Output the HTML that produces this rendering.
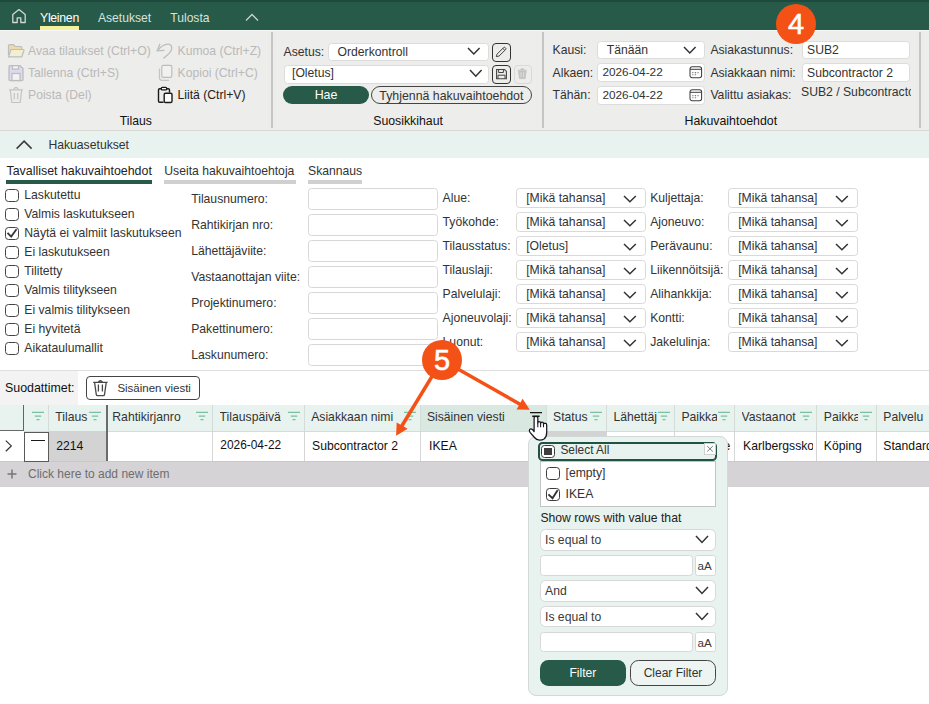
<!DOCTYPE html>
<html><head><meta charset="utf-8"><title>UI</title>
<style>
html,body{margin:0;padding:0;}
body{width:929px;height:704px;overflow:hidden;position:relative;background:#ffffff;font-family:"Liberation Sans",sans-serif;}
.r{position:absolute;}
.t{position:absolute;white-space:nowrap;line-height:1;font-family:"Liberation Sans",sans-serif;}
svg.r{overflow:visible;}
</style></head><body>
<div class="r" style="left:0px;top:0px;width:929px;height:30px;background:#275a48"></div>
<div class="r" style="left:0px;top:0px;width:929px;height:2px;background:#1f4a3b"></div>
<svg class="r" style="left:10px;top:7px;" width="18" height="18" viewBox="0 0 18 18"><path d="M2.8 15.5 V7.6 L9 2.6 L15.2 7.6 V15.5 H10.8 V10.8 H7.2 V15.5 Z" fill="none" stroke="#d2d8d5" stroke-width="1.3" stroke-linejoin="round"/></svg>
<div class="t" style="left:40px;top:12.0px;font-size:12.3px;color:#ffffff;letter-spacing:-0.3px">Yleinen</div>
<div class="r" style="left:40px;top:26px;width:39px;height:4px;background:#f3f19b"></div>
<div class="t" style="left:98px;top:12px;font-size:12.1px;color:#d9e2dd;">Asetukset</div>
<div class="t" style="left:170.3px;top:12px;font-size:12.1px;color:#d9e2dd;">Tulosta</div>
<svg class="r" style="left:245px;top:13px;" width="14" height="9" viewBox="0 0 14 9"><path d="M1 7.5 L7 1.5 L13 7.5" fill="none" stroke="#c9d2ce" stroke-width="1.3"/></svg>
<div class="r" style="left:0px;top:30px;width:929px;height:100px;background:#ededeb"></div>
<div class="r" style="left:0px;top:30px;width:929px;height:1px;background:#f6f6f4"></div>
<div class="r" style="left:0px;top:130px;width:929px;height:1px;background:#d6d6d4"></div>
<div class="r" style="left:271px;top:32px;width:2px;height:96px;background:#c5c5c3"></div>
<div class="r" style="left:542px;top:32px;width:2px;height:96px;background:#c5c5c3"></div>
<div class="r" style="left:919px;top:32px;width:2px;height:96px;background:#c5c5c3"></div>
<svg class="r" style="left:7px;top:43px;" width="18" height="16" viewBox="0 0 18 16"><path d="M1.5 12 V3 Q1.5 1.7 2.8 1.7 H6.5 L8.3 3.5 H13.5 Q14.8 3.5 14.8 4.8 V6" fill="#f2d9aa" stroke="#bdbdbd" stroke-width="1.2"/><path d="M1.5 13.8 L4 6.5 H16.3 Q17.2 6.5 16.9 7.5 L14.8 13.8 Z" fill="#efefd2" stroke="#bdbdbd" stroke-width="1.2" stroke-linejoin="round"/></svg>
<div class="t" style="left:28px;top:44.7px;font-size:12.2px;color:#b9b9b9;">Avaa tilaukset (Ctrl+O)</div>
<svg class="r" style="left:7px;top:64px;" width="18" height="18" viewBox="0 0 18 18"><path d="M2 2.6 Q2 1.6 3 1.6 H13 L16 4.6 V15.6 Q16 16.6 15 16.6 H3 Q2 16.6 2 15.6 Z" fill="#dcd9f1" stroke="#bdbdbd" stroke-width="1.3"/><rect x="5" y="9.5" width="8" height="7" fill="#f2f2f2" stroke="#bdbdbd" stroke-width="1.2"/><rect x="5.5" y="1.6" width="6" height="3.5" fill="#f2f2f2" stroke="#bdbdbd" stroke-width="1.2"/></svg>
<div class="t" style="left:28px;top:66.5px;font-size:12.2px;color:#b9b9b9;">Tallenna (Ctrl+S)</div>
<svg class="r" style="left:7px;top:86px;" width="18" height="18" viewBox="0 0 18 18"><path d="M2 3.8 H16 M6.5 3.8 L8 1.6 H10 L11.5 3.8 M3.3 4 L4.7 15.8 Q4.8 16.5 5.5 16.5 H12.5 Q13.2 16.5 13.3 15.8 L14.7 4 M7.3 7 V13.5 M10.7 7 V13.5" fill="none" stroke="#c3c3c3" stroke-width="1.2"/></svg>
<div class="t" style="left:28px;top:89px;font-size:12.2px;color:#b9b9b9;">Poista (Del)</div>
<svg class="r" style="left:155px;top:42px;" width="20" height="18" viewBox="0 0 20 18"><path d="M5 1.8 L2.2 8.8 L9.5 8.3" fill="none" stroke="#bdbdbd" stroke-width="1.3"/><path d="M2.6 8.5 Q8 1.8 13.5 2.2 Q17.5 3 16.5 7.5 Q15.8 10 13 12.5 L8.3 16.5" fill="none" stroke="#bdbdbd" stroke-width="1.3"/></svg>
<div class="t" style="left:177.5px;top:44.7px;font-size:12.2px;color:#b9b9b9;">Kumoa (Ctrl+Z)</div>
<svg class="r" style="left:157px;top:64px;" width="18" height="18" viewBox="0 0 18 18"><path d="M2.5 4.5 V14 Q2.5 16.3 4.8 16.3 H12" fill="none" stroke="#c5c5c5" stroke-width="1.2"/><rect x="4.8" y="1.3" width="10" height="12" rx="1.6" fill="#f1f1f1" stroke="#bdbdbd" stroke-width="1.2"/></svg>
<div class="t" style="left:177.5px;top:66.5px;font-size:12.2px;color:#b9b9b9;">Kopioi (Ctrl+C)</div>
<svg class="r" style="left:156px;top:86px;" width="18" height="18" viewBox="0 0 18 18"><path d="M5 2.8 H3.7 Q2.5 2.8 2.5 4 V15 Q2.5 16.2 3.7 16.2 H7.5 M11 2.8 H12.3 Q13.5 2.8 13.5 4 V6.5" fill="none" stroke="#1a1a1a" stroke-width="1.4"/><rect x="5.3" y="1.3" width="5.4" height="2.6" rx="1" fill="#fff" stroke="#1a1a1a" stroke-width="1.3"/><rect x="8.2" y="7.2" width="7.8" height="9.3" rx="1.3" fill="#fff" stroke="#1a1a1a" stroke-width="1.4"/></svg>
<div class="t" style="left:177.5px;top:89px;font-size:12.2px;color:#222;">Liitä (Ctrl+V)</div>
<div class="t" style="left:119.8px;top:115px;font-size:12.2px;color:#111;">Tilaus</div>
<div class="t" style="left:283.6px;top:46px;font-size:12.2px;color:#333;">Asetus:</div>
<div class="r" style="left:328px;top:42.5px;width:161px;height:18.8px;background:#fff;border-radius:3.5px;border:1px solid #dcdcdc;box-sizing:border-box"></div>
<div class="t" style="left:337.5px;top:46px;font-size:12.2px;color:#333;">Orderkontroll</div>
<svg class="r" style="left:467.3px;top:47.3px;" width="13.6" height="8" viewBox="0 0 13.6 8"><path d="M1 1 L6.8 7 L12.6 1" fill="none" stroke="#333" stroke-width="1.5"/></svg>
<div class="r" style="left:283.6px;top:65px;width:205.5px;height:18.8px;background:#fff;border-radius:3.5px;border:1px solid #dcdcdc;box-sizing:border-box"></div>
<div class="t" style="left:292px;top:67.3px;font-size:12.2px;color:#333;">[Oletus]</div>
<svg class="r" style="left:469.2px;top:69.2px;" width="13.6" height="8.2" viewBox="0 0 13.6 8.2"><path d="M1 1 L6.8 7.2 L12.6 1" fill="none" stroke="#333" stroke-width="1.5"/></svg>
<div class="r" style="left:492.2px;top:43.2px;width:18.6px;height:18.7px;border:1.4px solid #333;border-radius:4px;box-sizing:border-box"></div>
<svg class="r" style="left:492px;top:43px;" width="19" height="19" viewBox="0 0 19 19"><path d="M4.3 13.6 L5 11.2 L11.6 4.6 Q12.4 3.9 13.2 4.6 L13.7 5.1 Q14.4 5.9 13.6 6.6 L7 13.1 Z M10.8 5.4 L12.9 7.4" fill="none" stroke="#444" stroke-width="1"/></svg>
<div class="r" style="left:492.2px;top:65.2px;width:18.6px;height:18.7px;border:1.4px solid #333;border-radius:4px;box-sizing:border-box"></div>
<svg class="r" style="left:492px;top:65px;" width="19" height="19" viewBox="0 0 19 19"><path d="M4.6 4.5 H12.5 L14.4 6.4 V13.8 H4.6 Z" fill="none" stroke="#444" stroke-width="1.1"/><path d="M6.6 4.5 V7.5 H11.4 V4.5 M6 13.8 V10.2 H13 V13.8" fill="none" stroke="#444" stroke-width="1"/></svg>
<div class="r" style="left:513.6px;top:65.2px;width:18.2px;height:18.7px;border:1px solid #d9d9d9;border-radius:4px;box-sizing:border-box"></div>
<svg class="r" style="left:513px;top:65px;" width="19" height="19" viewBox="0 0 19 19"><path d="M4.5 5.2 H14 M7.5 5 L8.3 3.7 H10.3 L11.1 5 M5.5 6 L6.4 13.6 H12.2 L13.1 6 Z" fill="#c4c4c4" stroke="#c4c4c4" stroke-width="0.9"/><path d="M8 7.3 V12.2 M10.6 7.3 V12.2" stroke="#e2e2e2" stroke-width="0.8"/></svg>
<div class="r" style="left:283px;top:86px;width:86px;height:18.2px;background:#275a48;border-radius:9px"></div>
<div class="t" style="left:283px;top:88.8px;width:86px;text-align:center;font-size:12.4px;color:#fff">Hae</div>
<div class="r" style="left:371.3px;top:86.2px;width:160.5px;height:17.6px;border:1.3px solid #444;border-radius:9px;box-sizing:border-box"></div>
<div class="t" style="left:379.3px;top:89.6px;font-size:12.35px;color:#333;">Tyhjennä hakuvaihtoehdot</div>
<div class="t" style="left:373.2px;top:115px;font-size:12.3px;color:#111;">Suosikkihaut</div>
<div class="t" style="left:552.6px;top:44px;font-size:12.2px;color:#333;">Kausi:</div>
<div class="r" style="left:596.6px;top:40.7px;width:108.4px;height:18.4px;background:#fff;border-radius:3.5px;border:1px solid #dcdcdc;box-sizing:border-box"></div>
<div class="t" style="left:606.8px;top:44px;font-size:12.2px;color:#333;">Tänään</div>
<svg class="r" style="left:683px;top:45.8px;" width="13.6" height="8" viewBox="0 0 13.6 8"><path d="M1 1 L6.8 7 L12.6 1" fill="none" stroke="#333" stroke-width="1.5"/></svg>
<div class="t" style="left:552.6px;top:66.5px;font-size:12.2px;color:#333;">Alkaen:</div>
<div class="r" style="left:596.6px;top:63.3px;width:108.4px;height:18.7px;background:#fff;border-radius:3.5px;border:1px solid #dcdcdc;box-sizing:border-box"></div>
<div class="t" style="left:602.4px;top:67px;font-size:11.8px;color:#333;">2026-04-22</div>
<div class="t" style="left:552.6px;top:88.8px;font-size:12.2px;color:#333;">Tähän:</div>
<div class="r" style="left:596.6px;top:86.2px;width:108.4px;height:19px;background:#fff;border-radius:3.5px;border:1px solid #dcdcdc;box-sizing:border-box"></div>
<div class="t" style="left:602.4px;top:90px;font-size:11.8px;color:#333;">2026-04-22</div>
<svg class="r" style="left:688.5px;top:65.8px;" width="14" height="13" viewBox="0 0 14 13"><rect x="1" y="0.7" width="11.6" height="11" rx="2.2" fill="none" stroke="#3f3f3f" stroke-width="1.05"/><path d="M1 3.3 H12.6" stroke="#3f3f3f" stroke-width="1"/><path d="M3.3 6.6 h1.1 M5.8 6.6 h1.3 M8.5 6.6 h1.1 M3.3 8.7 h1.1 M5.8 8.7 h1.3" stroke="#777" stroke-width="1.05"/></svg>
<svg class="r" style="left:688.5px;top:88.6px;" width="14" height="13" viewBox="0 0 14 13"><rect x="1" y="0.7" width="11.6" height="11" rx="2.2" fill="none" stroke="#3f3f3f" stroke-width="1.05"/><path d="M1 3.3 H12.6" stroke="#3f3f3f" stroke-width="1"/><path d="M3.3 6.6 h1.1 M5.8 6.6 h1.3 M8.5 6.6 h1.1 M3.3 8.7 h1.1 M5.8 8.7 h1.3" stroke="#777" stroke-width="1.05"/></svg>
<div class="t" style="left:710.4px;top:44px;font-size:12.2px;color:#333;">Asiakastunnus:</div>
<div class="r" style="left:801.5px;top:40.7px;width:108.5px;height:18.4px;background:#fff;border-radius:3.5px;border:1px solid #dcdcdc;box-sizing:border-box"></div>
<div class="t" style="left:807px;top:44px;font-size:12.2px;color:#333;">SUB2</div>
<div class="t" style="left:710.4px;top:66.5px;font-size:12.2px;color:#333;">Asiakkaan nimi:</div>
<div class="r" style="left:801.5px;top:62.9px;width:108.5px;height:18.9px;background:#fff;border-radius:3.5px;border:1px solid #dcdcdc;box-sizing:border-box"></div>
<div class="t" style="left:807px;top:66.5px;font-size:12.2px;color:#333;">Subcontractor 2</div>
<div class="t" style="left:710.4px;top:88.6px;font-size:12.2px;color:#333;">Valittu asiakas:</div>
<div class="r" style="left:801px;top:84px;width:109.5px;height:16px;overflow:hidden;white-space:nowrap"><div class="t" style="left:0;top:2px;font-size:12.2px;color:#333">SUB2 / Subcontractor 2</div></div>
<div class="t" style="left:684.5px;top:115px;font-size:12.35px;color:#111;">Hakuvaihtoehdot</div>
<div class="r" style="left:0px;top:131px;width:929px;height:27px;background:#e8f2ee"></div>
<svg class="r" style="left:15px;top:139px;" width="18" height="11" viewBox="0 0 18 11"><path d="M1.6 9.6 L9.1 2.1 L16.6 9.6" fill="none" stroke="#3a3a3a" stroke-width="1.5"/></svg>
<div class="t" style="left:48.4px;top:138.7px;font-size:12.2px;color:#333;">Hakuasetukset</div>
<div class="t" style="left:6.5px;top:165px;font-size:12.4px;color:#222;">Tavalliset hakuvaihtoehdot</div>
<div class="r" style="left:6px;top:180px;width:146px;height:3.7px;background:#275a48"></div>
<div class="t" style="left:164.3px;top:165px;font-size:12.2px;color:#333;">Useita hakuvaihtoehtoja</div>
<div class="r" style="left:164px;top:180px;width:131.5px;height:3.7px;background:#d0d0d0"></div>
<div class="t" style="left:308px;top:165px;font-size:12.2px;color:#333;">Skannaus</div>
<div class="r" style="left:308px;top:180px;width:54px;height:3.7px;background:#d0d0d0"></div>
<div class="r" style="left:5px;top:189px;width:14px;height:13px;border:1.3px solid #444;border-radius:3.5px;box-sizing:border-box;background:#fff"></div>
<div class="t" style="left:24.3px;top:189px;font-size:12.2px;color:#333;">Laskutettu</div>
<div class="r" style="left:5px;top:208px;width:14px;height:13px;border:1.3px solid #444;border-radius:3.5px;box-sizing:border-box;background:#fff"></div>
<div class="t" style="left:24.3px;top:208px;font-size:12.2px;color:#333;">Valmis laskutukseen</div>
<div class="r" style="left:5px;top:227px;width:14px;height:13px;border:1.3px solid #444;border-radius:3.5px;box-sizing:border-box;background:#fff"></div>
<svg class="r" style="left:5px;top:227px;" width="14" height="13" viewBox="0 0 14 13"><path d="M2.5 5.8 L6.2 9.6 L11.5 2.3" fill="none" stroke="#3a3a3a" stroke-width="1.9"/></svg>
<div class="t" style="left:24.3px;top:227px;font-size:12.2px;color:#333;">Näytä ei valmiit laskutukseen</div>
<div class="r" style="left:5px;top:246px;width:14px;height:13px;border:1.3px solid #444;border-radius:3.5px;box-sizing:border-box;background:#fff"></div>
<div class="t" style="left:24.3px;top:246px;font-size:12.2px;color:#333;">Ei laskutukseen</div>
<div class="r" style="left:5px;top:265px;width:14px;height:13px;border:1.3px solid #444;border-radius:3.5px;box-sizing:border-box;background:#fff"></div>
<div class="t" style="left:24.3px;top:265px;font-size:12.2px;color:#333;">Tilitetty</div>
<div class="r" style="left:5px;top:284px;width:14px;height:13px;border:1.3px solid #444;border-radius:3.5px;box-sizing:border-box;background:#fff"></div>
<div class="t" style="left:24.3px;top:284px;font-size:12.2px;color:#333;">Valmis tilitykseen</div>
<div class="r" style="left:5px;top:304px;width:14px;height:13px;border:1.3px solid #444;border-radius:3.5px;box-sizing:border-box;background:#fff"></div>
<div class="t" style="left:24.3px;top:304px;font-size:12.2px;color:#333;">Ei valmis tilitykseen</div>
<div class="r" style="left:5px;top:323px;width:14px;height:13px;border:1.3px solid #444;border-radius:3.5px;box-sizing:border-box;background:#fff"></div>
<div class="t" style="left:24.3px;top:323px;font-size:12.2px;color:#333;">Ei hyvitetä</div>
<div class="r" style="left:5px;top:342px;width:14px;height:13px;border:1.3px solid #444;border-radius:3.5px;box-sizing:border-box;background:#fff"></div>
<div class="t" style="left:24.3px;top:342px;font-size:12.2px;color:#333;">Aikataulumallit</div>
<div class="t" style="left:191.2px;top:193px;font-size:12.2px;color:#333;">Tilausnumero:</div>
<div class="r" style="left:308px;top:188px;width:130px;height:22px;background:#fff;border:1px solid #d8d8d8;border-radius:3.5px;box-sizing:border-box"></div>
<div class="t" style="left:191.2px;top:219px;font-size:12.2px;color:#333;">Rahtikirjan nro:</div>
<div class="r" style="left:308px;top:214px;width:130px;height:22px;background:#fff;border:1px solid #d8d8d8;border-radius:3.5px;box-sizing:border-box"></div>
<div class="t" style="left:191.2px;top:245px;font-size:12.2px;color:#333;">Lähettäjäviite:</div>
<div class="r" style="left:308px;top:240px;width:130px;height:22px;background:#fff;border:1px solid #d8d8d8;border-radius:3.5px;box-sizing:border-box"></div>
<div class="t" style="left:191.2px;top:271px;font-size:12.2px;color:#333;">Vastaanottajan viite:</div>
<div class="r" style="left:308px;top:266px;width:130px;height:22px;background:#fff;border:1px solid #d8d8d8;border-radius:3.5px;box-sizing:border-box"></div>
<div class="t" style="left:191.2px;top:297px;font-size:12.2px;color:#333;">Projektinumero:</div>
<div class="r" style="left:308px;top:292px;width:130px;height:22px;background:#fff;border:1px solid #d8d8d8;border-radius:3.5px;box-sizing:border-box"></div>
<div class="t" style="left:191.2px;top:323px;font-size:12.2px;color:#333;">Pakettinumero:</div>
<div class="r" style="left:308px;top:318px;width:130px;height:22px;background:#fff;border:1px solid #d8d8d8;border-radius:3.5px;box-sizing:border-box"></div>
<div class="t" style="left:191.2px;top:349px;font-size:12.2px;color:#333;">Laskunumero:</div>
<div class="r" style="left:308px;top:344px;width:130px;height:22px;background:#fff;border:1px solid #d8d8d8;border-radius:3.5px;box-sizing:border-box"></div>
<div class="t" style="left:442.6px;top:192px;font-size:12.2px;color:#333;">Alue:</div>
<div class="r" style="left:516px;top:188px;width:130px;height:20px;background:#fff;border:1px solid #d9d9d9;border-radius:3.5px;box-sizing:border-box"></div>
<div class="t" style="left:526.2px;top:192px;font-size:12.2px;color:#333;">[Mikä tahansa]</div>
<svg class="r" style="left:623.4px;top:194.8px;" width="13.8" height="7.8" viewBox="0 0 13.8 7.8"><path d="M1 1 L6.9 6.8 L12.8 1" fill="none" stroke="#333" stroke-width="1.5"/></svg>
<div class="t" style="left:650.2px;top:192px;font-size:12.2px;color:#333;">Kuljettaja:</div>
<div class="r" style="left:728px;top:188px;width:130px;height:20px;background:#fff;border:1px solid #d9d9d9;border-radius:3.5px;box-sizing:border-box"></div>
<div class="t" style="left:738.2px;top:192px;font-size:12.2px;color:#333;">[Mikä tahansa]</div>
<svg class="r" style="left:835.4px;top:194.8px;" width="13.8" height="7.8" viewBox="0 0 13.8 7.8"><path d="M1 1 L6.9 6.8 L12.8 1" fill="none" stroke="#333" stroke-width="1.5"/></svg>
<div class="t" style="left:442.6px;top:216px;font-size:12.2px;color:#333;">Työkohde:</div>
<div class="r" style="left:516px;top:212px;width:130px;height:20px;background:#fff;border:1px solid #d9d9d9;border-radius:3.5px;box-sizing:border-box"></div>
<div class="t" style="left:526.2px;top:216px;font-size:12.2px;color:#333;">[Mikä tahansa]</div>
<svg class="r" style="left:623.4px;top:218.8px;" width="13.8" height="7.8" viewBox="0 0 13.8 7.8"><path d="M1 1 L6.9 6.8 L12.8 1" fill="none" stroke="#333" stroke-width="1.5"/></svg>
<div class="t" style="left:650.2px;top:216px;font-size:12.2px;color:#333;">Ajoneuvo:</div>
<div class="r" style="left:728px;top:212px;width:130px;height:20px;background:#fff;border:1px solid #d9d9d9;border-radius:3.5px;box-sizing:border-box"></div>
<div class="t" style="left:738.2px;top:216px;font-size:12.2px;color:#333;">[Mikä tahansa]</div>
<svg class="r" style="left:835.4px;top:218.8px;" width="13.8" height="7.8" viewBox="0 0 13.8 7.8"><path d="M1 1 L6.9 6.8 L12.8 1" fill="none" stroke="#333" stroke-width="1.5"/></svg>
<div class="t" style="left:442.6px;top:240px;font-size:12.2px;color:#333;">Tilausstatus:</div>
<div class="r" style="left:516px;top:236px;width:130px;height:20px;background:#fff;border:1px solid #d9d9d9;border-radius:3.5px;box-sizing:border-box"></div>
<div class="t" style="left:526.2px;top:240px;font-size:12.2px;color:#333;">[Oletus]</div>
<svg class="r" style="left:623.4px;top:242.8px;" width="13.8" height="7.8" viewBox="0 0 13.8 7.8"><path d="M1 1 L6.9 6.8 L12.8 1" fill="none" stroke="#333" stroke-width="1.5"/></svg>
<div class="t" style="left:650.2px;top:240px;font-size:12.2px;color:#333;">Perävaunu:</div>
<div class="r" style="left:728px;top:236px;width:130px;height:20px;background:#fff;border:1px solid #d9d9d9;border-radius:3.5px;box-sizing:border-box"></div>
<div class="t" style="left:738.2px;top:240px;font-size:12.2px;color:#333;">[Mikä tahansa]</div>
<svg class="r" style="left:835.4px;top:242.8px;" width="13.8" height="7.8" viewBox="0 0 13.8 7.8"><path d="M1 1 L6.9 6.8 L12.8 1" fill="none" stroke="#333" stroke-width="1.5"/></svg>
<div class="t" style="left:442.6px;top:264px;font-size:12.2px;color:#333;">Tilauslaji:</div>
<div class="r" style="left:516px;top:260px;width:130px;height:20px;background:#fff;border:1px solid #d9d9d9;border-radius:3.5px;box-sizing:border-box"></div>
<div class="t" style="left:526.2px;top:264px;font-size:12.2px;color:#333;">[Mikä tahansa]</div>
<svg class="r" style="left:623.4px;top:266.8px;" width="13.8" height="7.8" viewBox="0 0 13.8 7.8"><path d="M1 1 L6.9 6.8 L12.8 1" fill="none" stroke="#333" stroke-width="1.5"/></svg>
<div class="t" style="left:650.2px;top:264px;font-size:12.2px;color:#333;">Liikennöitsijä:</div>
<div class="r" style="left:728px;top:260px;width:130px;height:20px;background:#fff;border:1px solid #d9d9d9;border-radius:3.5px;box-sizing:border-box"></div>
<div class="t" style="left:738.2px;top:264px;font-size:12.2px;color:#333;">[Mikä tahansa]</div>
<svg class="r" style="left:835.4px;top:266.8px;" width="13.8" height="7.8" viewBox="0 0 13.8 7.8"><path d="M1 1 L6.9 6.8 L12.8 1" fill="none" stroke="#333" stroke-width="1.5"/></svg>
<div class="t" style="left:442.6px;top:288px;font-size:12.2px;color:#333;">Palvelulaji:</div>
<div class="r" style="left:516px;top:284px;width:130px;height:20px;background:#fff;border:1px solid #d9d9d9;border-radius:3.5px;box-sizing:border-box"></div>
<div class="t" style="left:526.2px;top:288px;font-size:12.2px;color:#333;">[Mikä tahansa]</div>
<svg class="r" style="left:623.4px;top:290.8px;" width="13.8" height="7.8" viewBox="0 0 13.8 7.8"><path d="M1 1 L6.9 6.8 L12.8 1" fill="none" stroke="#333" stroke-width="1.5"/></svg>
<div class="t" style="left:650.2px;top:288px;font-size:12.2px;color:#333;">Alihankkija:</div>
<div class="r" style="left:728px;top:284px;width:130px;height:20px;background:#fff;border:1px solid #d9d9d9;border-radius:3.5px;box-sizing:border-box"></div>
<div class="t" style="left:738.2px;top:288px;font-size:12.2px;color:#333;">[Mikä tahansa]</div>
<svg class="r" style="left:835.4px;top:290.8px;" width="13.8" height="7.8" viewBox="0 0 13.8 7.8"><path d="M1 1 L6.9 6.8 L12.8 1" fill="none" stroke="#333" stroke-width="1.5"/></svg>
<div class="t" style="left:442.6px;top:312px;font-size:12.2px;color:#333;">Ajoneuvolaji:</div>
<div class="r" style="left:516px;top:308px;width:130px;height:20px;background:#fff;border:1px solid #d9d9d9;border-radius:3.5px;box-sizing:border-box"></div>
<div class="t" style="left:526.2px;top:312px;font-size:12.2px;color:#333;">[Mikä tahansa]</div>
<svg class="r" style="left:623.4px;top:314.8px;" width="13.8" height="7.8" viewBox="0 0 13.8 7.8"><path d="M1 1 L6.9 6.8 L12.8 1" fill="none" stroke="#333" stroke-width="1.5"/></svg>
<div class="t" style="left:650.2px;top:312px;font-size:12.2px;color:#333;">Kontti:</div>
<div class="r" style="left:728px;top:308px;width:130px;height:20px;background:#fff;border:1px solid #d9d9d9;border-radius:3.5px;box-sizing:border-box"></div>
<div class="t" style="left:738.2px;top:312px;font-size:12.2px;color:#333;">[Mikä tahansa]</div>
<svg class="r" style="left:835.4px;top:314.8px;" width="13.8" height="7.8" viewBox="0 0 13.8 7.8"><path d="M1 1 L6.9 6.8 L12.8 1" fill="none" stroke="#333" stroke-width="1.5"/></svg>
<div class="t" style="left:442.6px;top:336px;font-size:12.2px;color:#333;">Luonut:</div>
<div class="r" style="left:516px;top:332px;width:130px;height:20px;background:#fff;border:1px solid #d9d9d9;border-radius:3.5px;box-sizing:border-box"></div>
<div class="t" style="left:526.2px;top:336px;font-size:12.2px;color:#333;">[Mikä tahansa]</div>
<svg class="r" style="left:623.4px;top:338.8px;" width="13.8" height="7.8" viewBox="0 0 13.8 7.8"><path d="M1 1 L6.9 6.8 L12.8 1" fill="none" stroke="#333" stroke-width="1.5"/></svg>
<div class="t" style="left:650.2px;top:336px;font-size:12.2px;color:#333;">Jakelulinja:</div>
<div class="r" style="left:728px;top:332px;width:130px;height:20px;background:#fff;border:1px solid #d9d9d9;border-radius:3.5px;box-sizing:border-box"></div>
<div class="t" style="left:738.2px;top:336px;font-size:12.2px;color:#333;">[Mikä tahansa]</div>
<svg class="r" style="left:835.4px;top:338.8px;" width="13.8" height="7.8" viewBox="0 0 13.8 7.8"><path d="M1 1 L6.9 6.8 L12.8 1" fill="none" stroke="#333" stroke-width="1.5"/></svg>
<div class="r" style="left:0px;top:370px;width:929px;height:1px;background:#dedede"></div>
<div class="r" style="left:0px;top:371px;width:78px;height:34px;background:#f3f3f3"></div>
<div class="t" style="left:5px;top:382px;font-size:12.4px;color:#111;">Suodattimet:</div>
<div class="r" style="left:86px;top:376px;width:114px;height:24px;border:1.3px solid #444;border-radius:4px;box-sizing:border-box;background:#fff"></div>
<svg class="r" style="left:92px;top:378px;" width="17" height="20" viewBox="0 0 17 20"><path d="M1.2 4.3 H15.6 M6.2 4.3 Q8.4 1.2 10.6 4.3 M2.6 4.6 L4.3 16.6 Q4.5 17.6 5.5 17.6 H11.3 Q12.3 17.6 12.5 16.6 L14.2 4.6 M6.4 6.6 V13.4 M10.4 6.6 V13.4" fill="none" stroke="#484848" stroke-width="1.3"/></svg>
<div class="t" style="left:117.4px;top:383px;font-size:11.5px;color:#333;">Sisäinen viesti</div>
<div class="r" style="left:0px;top:405px;width:929px;height:26px;background:#e8f2ee"></div>
<div class="r" style="left:421px;top:405px;width:125px;height:26px;background:#d9e9e2"></div>
<div class="r" style="left:24px;top:431px;width:905px;height:1px;background:#d9d9d9"></div>
<div class="r" style="left:0px;top:432px;width:929px;height:29px;background:#fff"></div>
<div class="r" style="left:49px;top:431px;width:57px;height:30px;background:#d4d3d4"></div>
<div class="r" style="left:547px;top:431px;width:59px;height:30px;background:#d4d3d4"></div>
<div class="r" style="left:0px;top:461px;width:929px;height:1px;background:#c9c9c9"></div>
<div class="r" style="left:0px;top:462px;width:929px;height:25px;background:#d5d3d5"></div>
<div class="r" style="left:48px;top:405px;width:1px;height:26px;background:#d4dcd8"></div>
<div class="r" style="left:48px;top:431px;width:1px;height:30px;background:#d6d6d6"></div>
<div class="r" style="left:212px;top:405px;width:1px;height:26px;background:#d4dcd8"></div>
<div class="r" style="left:212px;top:431px;width:1px;height:30px;background:#d6d6d6"></div>
<div class="r" style="left:304px;top:405px;width:1px;height:26px;background:#d4dcd8"></div>
<div class="r" style="left:304px;top:431px;width:1px;height:30px;background:#d6d6d6"></div>
<div class="r" style="left:420px;top:405px;width:1px;height:26px;background:#d4dcd8"></div>
<div class="r" style="left:420px;top:431px;width:1px;height:30px;background:#d6d6d6"></div>
<div class="r" style="left:546px;top:405px;width:1px;height:26px;background:#d4dcd8"></div>
<div class="r" style="left:546px;top:431px;width:1px;height:30px;background:#d6d6d6"></div>
<div class="r" style="left:606px;top:405px;width:1px;height:26px;background:#d4dcd8"></div>
<div class="r" style="left:606px;top:431px;width:1px;height:30px;background:#d6d6d6"></div>
<div class="r" style="left:674px;top:405px;width:1px;height:26px;background:#d4dcd8"></div>
<div class="r" style="left:674px;top:431px;width:1px;height:30px;background:#d6d6d6"></div>
<div class="r" style="left:734px;top:405px;width:1px;height:26px;background:#d4dcd8"></div>
<div class="r" style="left:734px;top:431px;width:1px;height:30px;background:#d6d6d6"></div>
<div class="r" style="left:816px;top:405px;width:1px;height:26px;background:#d4dcd8"></div>
<div class="r" style="left:816px;top:431px;width:1px;height:30px;background:#d6d6d6"></div>
<div class="r" style="left:876px;top:405px;width:1px;height:26px;background:#d4dcd8"></div>
<div class="r" style="left:876px;top:431px;width:1px;height:30px;background:#d6d6d6"></div>
<div class="r" style="left:23px;top:405px;width:1px;height:26px;background:#626262"></div>
<div class="r" style="left:0px;top:430px;width:23px;height:1px;background:#6a6a6a"></div>
<div class="r" style="left:106px;top:405px;width:2px;height:56px;background:#6b6b6b"></div>
<div class="r" style="left:24px;top:432px;width:25px;height:30px;border:1.2px solid #5a5a5a;box-sizing:border-box;background:#fff"></div>
<div class="r" style="left:31px;top:440px;width:13.5px;height:1.4px;background:#1a1a1a"></div>
<svg class="r" style="left:3px;top:438px;" width="12" height="16" viewBox="0 0 12 16"><path d="M2.8 2.6 L8.3 7.9 L2.8 13.2" fill="none" stroke="#333" stroke-width="1.2"/></svg>
<div class="r" style="left:55.3px;top:405px;width:32.7px;height:26px;overflow:hidden"><div class="t" style="left:0;top:5.7px;font-size:12.2px;color:#333">Tilaus</div></div>
<div class="r" style="left:112.3px;top:405px;width:82.7px;height:26px;overflow:hidden"><div class="t" style="left:0;top:5.7px;font-size:12.2px;color:#333">Rahtikirjanro</div></div>
<div class="r" style="left:219.6px;top:405px;width:67.4px;height:26px;overflow:hidden"><div class="t" style="left:0;top:5.7px;font-size:12.2px;color:#333">Tilauspäivä</div></div>
<div class="r" style="left:311.2px;top:405px;width:91.80000000000001px;height:26px;overflow:hidden"><div class="t" style="left:0;top:5.7px;font-size:12.2px;color:#333">Asiakkaan nimi</div></div>
<div class="r" style="left:426.9px;top:405px;width:101.10000000000002px;height:26px;overflow:hidden"><div class="t" style="left:0;top:5.7px;font-size:12.2px;color:#333">Sisäinen viesti</div></div>
<div class="r" style="left:553px;top:405px;width:36px;height:26px;overflow:hidden"><div class="t" style="left:0;top:5.7px;font-size:12.2px;color:#333">Status</div></div>
<div class="r" style="left:613.5px;top:405px;width:43.0px;height:26px;overflow:hidden"><div class="t" style="left:0;top:5.7px;font-size:12.2px;color:#333">Lähettäjä</div></div>
<div class="r" style="left:681.4px;top:405px;width:36.10000000000002px;height:26px;overflow:hidden"><div class="t" style="left:0;top:5.7px;font-size:12.2px;color:#333">Paikkakunta</div></div>
<div class="r" style="left:741.6px;top:405px;width:57.39999999999998px;height:26px;overflow:hidden"><div class="t" style="left:0;top:5.7px;font-size:12.2px;color:#333">Vastaanot</div></div>
<div class="r" style="left:823.8px;top:405px;width:34.5px;height:26px;overflow:hidden"><div class="t" style="left:0;top:5.7px;font-size:12.2px;color:#333">Paikkakunta</div></div>
<div class="r" style="left:883.3px;top:405px;width:45.700000000000045px;height:26px;overflow:hidden"><div class="t" style="left:0;top:5.7px;font-size:12.2px;color:#333">Palvelu</div></div>
<svg class="r" style="left:32px;top:411px;" width="13" height="11" viewBox="0 0 13 11"><path d="M0 1.4 H12 M2.8 5.2 H9.2 M4.5 8.7 H7.5" stroke="#79c19f" stroke-width="1.25"/></svg>
<svg class="r" style="left:89px;top:411px;" width="13" height="11" viewBox="0 0 13 11"><path d="M0 1.4 H12 M2.8 5.2 H9.2 M4.5 8.7 H7.5" stroke="#79c19f" stroke-width="1.25"/></svg>
<svg class="r" style="left:196px;top:411px;" width="13" height="11" viewBox="0 0 13 11"><path d="M0 1.4 H12 M2.8 5.2 H9.2 M4.5 8.7 H7.5" stroke="#79c19f" stroke-width="1.25"/></svg>
<svg class="r" style="left:288px;top:411px;" width="13" height="11" viewBox="0 0 13 11"><path d="M0 1.4 H12 M2.8 5.2 H9.2 M4.5 8.7 H7.5" stroke="#79c19f" stroke-width="1.25"/></svg>
<svg class="r" style="left:404px;top:411px;" width="13" height="11" viewBox="0 0 13 11"><path d="M0 1.4 H12 M2.8 5.2 H9.2 M4.5 8.7 H7.5" stroke="#79c19f" stroke-width="1.25"/></svg>
<svg class="r" style="left:590px;top:411px;" width="13" height="11" viewBox="0 0 13 11"><path d="M0 1.4 H12 M2.8 5.2 H9.2 M4.5 8.7 H7.5" stroke="#79c19f" stroke-width="1.25"/></svg>
<svg class="r" style="left:658px;top:411px;" width="13" height="11" viewBox="0 0 13 11"><path d="M0 1.4 H12 M2.8 5.2 H9.2 M4.5 8.7 H7.5" stroke="#79c19f" stroke-width="1.25"/></svg>
<svg class="r" style="left:718px;top:411px;" width="13" height="11" viewBox="0 0 13 11"><path d="M0 1.4 H12 M2.8 5.2 H9.2 M4.5 8.7 H7.5" stroke="#79c19f" stroke-width="1.25"/></svg>
<svg class="r" style="left:800px;top:411px;" width="13" height="11" viewBox="0 0 13 11"><path d="M0 1.4 H12 M2.8 5.2 H9.2 M4.5 8.7 H7.5" stroke="#79c19f" stroke-width="1.25"/></svg>
<svg class="r" style="left:860px;top:411px;" width="13" height="11" viewBox="0 0 13 11"><path d="M0 1.4 H12 M2.8 5.2 H9.2 M4.5 8.7 H7.5" stroke="#79c19f" stroke-width="1.25"/></svg>
<div class="t" style="left:56.2px;top:440px;font-size:12.2px;color:#111;">2214</div>
<div class="t" style="left:220.3px;top:440px;font-size:11.9px;color:#111;">2026-04-22</div>
<div class="t" style="left:312px;top:440px;font-size:12.2px;color:#111;">Subcontractor 2</div>
<div class="t" style="left:429px;top:440px;font-size:12.2px;color:#111;">IKEA</div>
<div class="t" style="left:723.5px;top:440px;font-size:12.2px;color:#111;">e</div>
<div class="r" style="left:743px;top:432px;width:69.5px;height:29px;overflow:hidden"><div class="t" style="left:0;top:8px;font-size:12.2px;color:#111">Karlbergsskog</div></div>
<div class="t" style="left:823.8px;top:440px;font-size:12.2px;color:#111;">Köping</div>
<div class="t" style="left:883.3px;top:440px;font-size:12.2px;color:#111;">Standard</div>
<svg class="r" style="left:5px;top:467px;" width="14" height="14" viewBox="0 0 14 14"><path d="M7 2.5 V11.5 M2.5 7 H11.5" stroke="#777" stroke-width="1.5"/></svg>
<div class="t" style="left:28px;top:468.3px;font-size:12px;color:#6e6e6e;">Click here to add new item</div>
<div class="r" style="left:528.3px;top:435.5px;width:199.5px;height:260px;background:#e8f2ee;border:1px solid #d3d9d6;border-radius:8px;box-sizing:border-box"></div>
<div class="r" style="left:540px;top:461px;width:175.5px;height:45.5px;background:#fff;border:1px solid #c4c4c4;box-sizing:border-box"></div>
<div class="r" style="left:538px;top:442px;width:179px;height:19px;border:2px solid #215242;border-radius:4.5px;box-sizing:border-box;background:#e8f2ee"></div>
<div class="r" style="left:541px;top:445px;width:14px;height:13px;border:1.3px solid #3c3c3c;border-radius:3.5px;box-sizing:border-box;background:#fff"></div>
<div class="r" style="left:543.8px;top:448px;width:8.3px;height:7px;background:#3e3e3e"></div>
<div class="t" style="left:560.4px;top:445px;font-size:11.9px;color:#333;">Select All</div>
<div class="r" style="left:703.6px;top:443px;width:12px;height:11.6px;background:#fff;border:1px solid #cfcfcf;box-sizing:border-box"></div>
<svg class="r" style="left:703.6px;top:443px;" width="12" height="12" viewBox="0 0 12 12"><path d="M3.2 3.1 L8.8 8.5 M8.8 3.1 L3.2 8.5" stroke="#666" stroke-width="0.9"/></svg>
<div class="r" style="left:546px;top:467px;width:14px;height:12.8px;border:1.3px solid #3c3c3c;border-radius:3.5px;box-sizing:border-box;background:#fff"></div>
<div class="t" style="left:565.5px;top:466.5px;font-size:12.2px;color:#333;">[empty]</div>
<div class="r" style="left:546px;top:488px;width:14px;height:13px;border:1.3px solid #3c3c3c;border-radius:3.5px;box-sizing:border-box;background:#fff"></div>
<svg class="r" style="left:546px;top:488px;" width="14" height="13" viewBox="0 0 14 13"><path d="M2.4 6.4 L6.5 10.2 L11.6 2.3" fill="none" stroke="#333" stroke-width="1.9"/></svg>
<div class="t" style="left:565.5px;top:487.7px;font-size:12.2px;color:#333;">IKEA</div>
<div class="t" style="left:540.4px;top:512px;font-size:12.2px;color:#222;">Show rows with value that</div>
<div class="r" style="left:540px;top:529px;width:176px;height:22px;background:#fff;border:1px solid #d8d8d8;border-radius:5.5px;box-sizing:border-box"></div>
<div class="t" style="left:545px;top:534px;font-size:12.2px;color:#3a3a3a;">Is equal to</div>
<svg class="r" style="left:694.8px;top:535px;" width="14" height="8.5" viewBox="0 0 14 8.5"><path d="M1 1 L7.0 7.5 L13 1" fill="none" stroke="#333" stroke-width="1.5"/></svg>
<div class="r" style="left:540px;top:555px;width:152.5px;height:21px;background:#fff;border:1px solid #d8d8d8;border-radius:3.5px;box-sizing:border-box"></div>
<div class="r" style="left:695px;top:555px;width:21px;height:21px;background:#fff;border:1px solid #d8d8d8;border-radius:2.5px;box-sizing:border-box"></div>
<div class="t" style="left:697.5px;top:559.5px;font-size:11.6px;color:#3a3a3a;">aA</div>
<div class="r" style="left:540px;top:580px;width:176px;height:22px;background:#fff;border:1px solid #d8d8d8;border-radius:5.5px;box-sizing:border-box"></div>
<div class="t" style="left:545px;top:585px;font-size:12.2px;color:#3a3a3a;">And</div>
<svg class="r" style="left:694.8px;top:586px;" width="14" height="8.5" viewBox="0 0 14 8.5"><path d="M1 1 L7.0 7.5 L13 1" fill="none" stroke="#333" stroke-width="1.5"/></svg>
<div class="r" style="left:540px;top:606px;width:176px;height:21px;background:#fff;border:1px solid #d8d8d8;border-radius:5.5px;box-sizing:border-box"></div>
<div class="t" style="left:545px;top:611px;font-size:12.2px;color:#3a3a3a;">Is equal to</div>
<svg class="r" style="left:694.8px;top:612px;" width="14" height="8.5" viewBox="0 0 14 8.5"><path d="M1 1 L7.0 7.5 L13 1" fill="none" stroke="#333" stroke-width="1.5"/></svg>
<div class="r" style="left:540px;top:632px;width:152.5px;height:20px;background:#fff;border:1px solid #d8d8d8;border-radius:3.5px;box-sizing:border-box"></div>
<div class="r" style="left:695px;top:632px;width:21px;height:20px;background:#fff;border:1px solid #d8d8d8;border-radius:2.5px;box-sizing:border-box"></div>
<div class="t" style="left:697.5px;top:636.5px;font-size:11.6px;color:#3a3a3a;">aA</div>
<div class="r" style="left:539.8px;top:660px;width:86.2px;height:26px;background:#275a48;border-radius:8.5px"></div>
<div class="t" style="left:539.8px;top:667px;width:86.2px;text-align:center;font-size:12.1px;color:#fff">Filter</div>
<div class="r" style="left:630px;top:660px;width:86px;height:26px;border:1.2px solid #444;border-radius:8.5px;box-sizing:border-box;background:#eef4f1"></div>
<div class="t" style="left:630px;top:667px;width:86px;text-align:center;font-size:12px;color:#333">Clear Filter</div>
<svg class="r" style="left:527px;top:414px;" width="22" height="28" viewBox="0 0 22 28"><path d="M7.1 17.5 V3.8 Q7.1 2.3 8.95 2.3 Q10.8 2.3 10.8 3.8 V9 Q10.9 7.6 12.2 7.6 Q13.6 7.6 13.6 9 V9.6 Q13.8 8.2 15 8.2 Q16.5 8.2 16.5 9.6 V10.4 Q16.8 9.2 18.1 9.2 Q19.7 9.3 19.7 11 V18.5 Q19.7 23 17 25 Q15 26.3 12.5 26.2 Q9.5 26 7.5 23.5 L3 18.3 Q1.8 16.6 2.7 15.4 Q3.8 14.3 5.4 15.4 Z" fill="#fff" stroke="#151520" stroke-width="1.25" stroke-linejoin="round"/><path d="M10.8 9 V13.3 M13.6 9.6 V13.3 M16.5 10.4 V13.3" stroke="#151520" stroke-width="1.05"/></svg>
<svg class="r" style="left:529px;top:411px;" width="15" height="11" viewBox="0 0 15 11"><path d="M1 1.6 H13 M3.2 5.2 H10.6" stroke="#151515" stroke-width="1.4"/></svg>
<div class="r" style="left:776px;top:4px;width:40px;height:40px;border-radius:50%;background:#f45116"></div>
<div class="t" style="left:776px;top:4px;width:40px;height:40px;line-height:40px;text-align:center;font-size:29px;color:#fff;-webkit-text-stroke:0.6px #fff">4</div>
<svg class="r" style="left:0px;top:0px;pointer-events:none" width="929" height="704" viewBox="0 0 929 704"><line x1="442" y1="360" x2="401.5" y2="426.5" stroke="#f45116" stroke-width="3.5"/>
<polygon points="396.1,435.8 396.7,422.6 407.6,428.8" fill="#f45116"/>
<line x1="442" y1="360" x2="520.5" y2="404.5" stroke="#f45116" stroke-width="3.5"/>
<polygon points="529.8,409.7 522.6,398.8 516.6,409.6" fill="#f45116"/></svg>
<div class="r" style="left:421.7px;top:339.7px;width:40.6px;height:40.6px;border-radius:50%;background:#f45116"></div>
<div class="t" style="left:421.7px;top:339.7px;width:40.6px;height:40.6px;line-height:40.6px;text-align:center;font-size:29px;color:#fff;-webkit-text-stroke:0.6px #fff">5</div>
</body></html>
